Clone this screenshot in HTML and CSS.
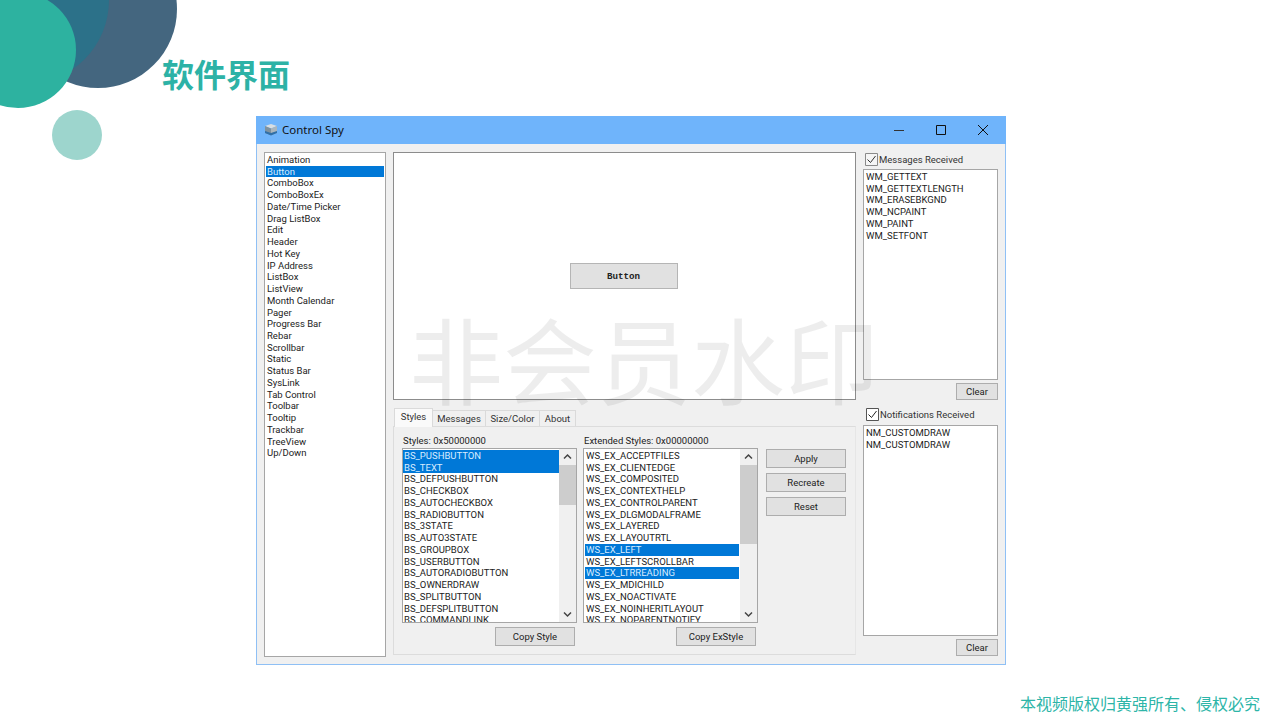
FILE: index.html
```html
<!DOCTYPE html>
<html lang="zh-CN">
<head>
    <meta charset="UTF-8">
    <meta name="viewport" content="width=device-width, initial-scale=1.0">
    <title>软件界面</title>
    <link rel="stylesheet" href="styles.css">
</head>
<body>
    <div class="slide">
        <div class="circle circle-dark"></div>
        <div class="circle circle-mid"></div>
        <div class="circle circle-green"></div>
        <div class="circle circle-small"></div>

        <h1 class="slide-title">软件界面</h1>

        <div class="window">
            <div class="titlebar">
                <svg class="app-icon" width="14" height="13" viewBox="0 0 14 13">
                    <path d="M7 1 L13 3 L7 5.5 L1 3 Z" fill="#d8dee2"/>
                    <path d="M1 3 L7 5.5 V12 L1 10 Z" fill="#7f929f"/>
                    <path d="M13 3 L7 5.5 V12 L13 10 Z" fill="#a9b5bd"/>
                    <path d="M1 8 L7 10 L13 8 V10 L7 12.5 L1 10 Z" fill="#2f6fa8"/>
                </svg>
                <span class="window-name">Control Spy</span>
                <div class="window-controls">
                    <svg width="12" height="12" viewBox="0 0 12 12"><path d="M1 6.5 H11" stroke="#333" fill="none"/></svg>
                    <svg width="12" height="12" viewBox="0 0 12 12"><path d="M1.5 1.5 H10.5 V10.5 H1.5 Z" stroke="#111" fill="none"/></svg>
                    <svg width="12" height="12" viewBox="0 0 12 12"><path d="M1 1 L11 11 M11 1 L1 11" stroke="#111" fill="none"/></svg>
                </div>
            </div>

            <div class="client">
                <div class="listbox control-list">
                    <div class="rows">
                        <div class="row">Animation</div>
                        <div class="row selected">Button</div>
                        <div class="row">ComboBox</div>
                        <div class="row">ComboBoxEx</div>
                        <div class="row">Date/Time Picker</div>
                        <div class="row">Drag ListBox</div>
                        <div class="row">Edit</div>
                        <div class="row">Header</div>
                        <div class="row">Hot Key</div>
                        <div class="row">IP Address</div>
                        <div class="row">ListBox</div>
                        <div class="row">ListView</div>
                        <div class="row">Month Calendar</div>
                        <div class="row">Pager</div>
                        <div class="row">Progress Bar</div>
                        <div class="row">Rebar</div>
                        <div class="row">Scrollbar</div>
                        <div class="row">Static</div>
                        <div class="row">Status Bar</div>
                        <div class="row">SysLink</div>
                        <div class="row">Tab Control</div>
                        <div class="row">Toolbar</div>
                        <div class="row">Tooltip</div>
                        <div class="row">Trackbar</div>
                        <div class="row">TreeView</div>
                        <div class="row">Up/Down</div>
                    </div>
                </div>

                <div class="center">
                    <div class="preview">
                        <button class="preview-button">Button</button>
                    </div>
                    <div class="tabs">
                        <div class="tab active">Styles</div>
                        <div class="tab tab-messages">Messages</div>
                        <div class="tab tab-size">Size/Color</div>
                        <div class="tab tab-about">About</div>
                    </div>
                    <div class="tab-panel">
                        <div class="style-col">
                            <div class="col-label">Styles: 0x50000000</div>
                            <div class="listbox style-list flush">
                                <div class="rows">
                                    <div class="row selected">BS_PUSHBUTTON</div>
                                    <div class="row selected">BS_TEXT</div>
                                    <div class="row">BS_DEFPUSHBUTTON</div>
                                    <div class="row">BS_CHECKBOX</div>
                                    <div class="row">BS_AUTOCHECKBOX</div>
                                    <div class="row">BS_RADIOBUTTON</div>
                                    <div class="row">BS_3STATE</div>
                                    <div class="row">BS_AUTO3STATE</div>
                                    <div class="row">BS_GROUPBOX</div>
                                    <div class="row">BS_USERBUTTON</div>
                                    <div class="row">BS_AUTORADIOBUTTON</div>
                                    <div class="row">BS_OWNERDRAW</div>
                                    <div class="row">BS_SPLITBUTTON</div>
                                    <div class="row">BS_DEFSPLITBUTTON</div>
                                    <div class="row">BS_COMMANDLINK</div>
                                </div>
                                <div class="scrollbar">
                                    <svg class="arrow" width="17" height="16" viewBox="0 0 17 16"><path d="M5 9.5 L8.5 6 L12 9.5" stroke="#444" stroke-width="1.5" fill="none"/></svg>
                                    <div class="track"><div class="thumb thumb-short"></div></div>
                                    <svg class="arrow" width="17" height="16" viewBox="0 0 17 16"><path d="M5 6.5 L8.5 10 L12 6.5" stroke="#444" stroke-width="1.5" fill="none"/></svg>
                                </div>
                            </div>
                            <button class="btn copy-btn">Copy Style</button>
                        </div>

                        <div class="style-col">
                            <div class="col-label">Extended Styles: 0x00000000</div>
                            <div class="listbox style-list">
                                <div class="rows">
                                    <div class="row">WS_EX_ACCEPTFILES</div>
                                    <div class="row">WS_EX_CLIENTEDGE</div>
                                    <div class="row">WS_EX_COMPOSITED</div>
                                    <div class="row">WS_EX_CONTEXTHELP</div>
                                    <div class="row">WS_EX_CONTROLPARENT</div>
                                    <div class="row">WS_EX_DLGMODALFRAME</div>
                                    <div class="row">WS_EX_LAYERED</div>
                                    <div class="row">WS_EX_LAYOUTRTL</div>
                                    <div class="row selected">WS_EX_LEFT</div>
                                    <div class="row">WS_EX_LEFTSCROLLBAR</div>
                                    <div class="row selected">WS_EX_LTRREADING</div>
                                    <div class="row">WS_EX_MDICHILD</div>
                                    <div class="row">WS_EX_NOACTIVATE</div>
                                    <div class="row">WS_EX_NOINHERITLAYOUT</div>
                                    <div class="row">WS_EX_NOPARENTNOTIFY</div>
                                </div>
                                <div class="scrollbar">
                                    <svg class="arrow" width="17" height="16" viewBox="0 0 17 16"><path d="M5 9.5 L8.5 6 L12 9.5" stroke="#444" stroke-width="1.5" fill="none"/></svg>
                                    <div class="track"><div class="thumb thumb-long"></div></div>
                                    <svg class="arrow" width="17" height="16" viewBox="0 0 17 16"><path d="M5 6.5 L8.5 10 L12 6.5" stroke="#444" stroke-width="1.5" fill="none"/></svg>
                                </div>
                            </div>
                            <button class="btn copy-btn">Copy ExStyle</button>
                        </div>

                        <div class="action-col">
                            <button class="btn">Apply</button>
                            <button class="btn">Recreate</button>
                            <button class="btn">Reset</button>
                        </div>
                    </div>
                </div>

                <div class="log-col">
                    <label class="check-label">
                        <svg class="check" width="13" height="13" viewBox="0 0 13 13"><path d="M.5 .5 H12.5 V12.5 H.5 Z" fill="#f5f5f5" stroke="#8a8a8a"/><path d="M2.5 6.5 L5.5 9.5 L10.5 3" stroke="#333" fill="none"/></svg>
                        Messages Received
                    </label>
                    <div class="listbox log-list">
                        <div class="rows">
                            <div class="row">WM_GETTEXT</div>
                            <div class="row">WM_GETTEXTLENGTH</div>
                            <div class="row">WM_ERASEBKGND</div>
                            <div class="row">WM_NCPAINT</div>
                            <div class="row">WM_PAINT</div>
                            <div class="row">WM_SETFONT</div>
                        </div>
                    </div>
                    <button class="btn clear-btn">Clear</button>

                    <label class="check-label check-second">
                        <svg class="check" width="13" height="13" viewBox="0 0 13 13"><path d="M.5 .5 H12.5 V12.5 H.5 Z" fill="#fff" stroke="#555"/><path d="M2.5 6.5 L5.5 9.5 L10.5 3" stroke="#222" fill="none"/></svg>
                        Notifications Received
                    </label>
                    <div class="listbox log-list">
                        <div class="rows">
                            <div class="row">NM_CUSTOMDRAW</div>
                            <div class="row">NM_CUSTOMDRAW</div>
                        </div>
                    </div>
                    <button class="btn clear-btn">Clear</button>
                </div>
            </div>

            <div class="watermark">非会员水印</div>
        </div>

        <div class="copyright">本视频版权归黄强所有、侵权必究</div>
    </div>
</body>
</html>
```

FILE: styles.css
```css
* {
    box-sizing: border-box;
}

body {
    margin: 0;
    background: #fff;
    overflow: hidden;
}

.slide {
    position: relative;
    width: 1280px;
    height: 720px;
    overflow: hidden;
    font-family: "Noto Sans CJK SC", "Noto Sans", sans-serif;
}

.circle {
    position: absolute;
    border-radius: 50%;
}

.circle-dark {
    left: 19px;
    top: -70px;
    width: 158px;
    height: 158px;
    background: #44667f;
}

.circle-mid {
    left: -59px;
    top: -84px;
    width: 168px;
    height: 168px;
    background: #2c7189;
}

.circle-green {
    left: -40px;
    top: -8px;
    width: 116px;
    height: 116px;
    background: #2db2a0;
}

.circle-small {
    left: 52px;
    top: 110px;
    width: 50px;
    height: 50px;
    background: #9dd5cd;
}

.slide-title {
    position: relative;
    margin: 0;
    padding: 50px 0 0 162px;
    height: 116px;
    font-size: 32px;
    line-height: 46px;
    font-weight: 700;
    color: #2db2a6;
}

.window {
    position: relative;
    margin-left: 256px;
    width: 750px;
    height: 549px;
    background: #f0f0f0;
    border: 1px solid #8fc0f5;
    border-top: 0;
    font-family: Roboto, sans-serif;
    font-size: 9.5px;
    color: #222;
}

.titlebar {
    display: flex;
    align-items: center;
    height: 28px;
    margin: 0 -1px;
    padding: 0 0 1px 8px;
    background: #6fb4fb;
}

.app-icon {
    margin-right: 4px;
}

.window-name {
    font-family: "Noto Sans", sans-serif;
    font-size: 11.5px;
    color: #111;
}

.window-controls {
    display: flex;
    gap: 30px;
    margin-left: auto;
    padding-right: 17px;
}

.client {
    display: grid;
    grid-template-columns: 122px 463px 135px;
    column-gap: 7px;
    padding: 8px 7px 0;
}

.listbox {
    display: flex;
    background: #fff;
    border: 1px solid #a6a6a6;
    overflow: hidden;
}

.rows {
    flex: 1;
    min-width: 0;
    padding: 1px 1px 0;
}

.flush .rows {
    padding-left: 0;
    padding-right: 0;
}

.row {
    height: 11.74px;
    line-height: 12px;
    padding-left: 1px;
    white-space: nowrap;
}

.row.selected {
    background: #0078d7;
    color: #d8ecff;
}

.control-list {
    height: 505px;
}

.center {
    display: flex;
    flex-direction: column;
}

.preview {
    display: flex;
    align-items: center;
    justify-content: center;
    height: 248px;
    padding-right: 2px;
    background: #fff;
    border: 1px solid #8c8c8c;
}

.preview-button {
    width: 108px;
    height: 26px;
    padding: 0;
    background: #e1e1e1;
    border: 1px solid #b5b5b5;
    font-family: "Liberation Mono", monospace;
    font-size: 9.2px;
    font-weight: 700;
    color: #222;
}

.tabs {
    display: flex;
    align-items: flex-end;
    height: 19px;
    margin-top: 8px;
    padding-left: 1px;
}

.tab {
    height: 17px;
    line-height: 15px;
    text-align: center;
    border: 1px solid #dadada;
    border-bottom: 0;
    border-left: 0;
    color: #333;
}

.tab.active {
    width: 39px;
    height: 19px;
    line-height: 15px;
    background: #fafafa;
    border-left: 1px solid #dadada;
    position: relative;
    z-index: 1;
}

.tab-messages {
    width: 53px;
}

.tab-size {
    width: 54px;
}

.tab-about {
    width: 36px;
}

.tab-panel {
    display: flex;
    height: 229px;
    margin-top: -1px;
    padding-left: 8px;
    border: 1px solid #dcdcdc;
    border-right-color: #e6e6e6;
}

.style-col {
    display: flex;
    flex-direction: column;
    width: 175px;
    margin-right: 6px;
}

.col-label {
    height: 21px;
    padding: 7px 0 0 1px;
    line-height: 14px;
}

.style-list {
    height: 175px;
}

.scrollbar {
    display: flex;
    flex-direction: column;
    flex: none;
    width: 17px;
    background: #f0f0f0;
}

.arrow {
    flex: none;
}

.track {
    flex: 1;
}

.thumb {
    background: #cdcdcd;
}

.thumb-short {
    height: 40px;
}

.thumb-long {
    height: 79px;
}

.btn {
    width: 80px;
    height: 19px;
    padding: 0;
    background: #e1e1e1;
    border: 1px solid #adadad;
    font-family: inherit;
    font-size: 9.5px;
    color: #222;
}

.copy-btn {
    align-self: flex-end;
    margin: 4px 2px 0 0;
}

.action-col {
    display: flex;
    flex-direction: column;
    gap: 5px;
    padding: 22px 0 0 2px;
}

.log-col {
    display: flex;
    flex-direction: column;
}

.check-label {
    display: flex;
    align-items: center;
    gap: 1px;
    height: 17px;
    padding: 0 0 3px 2px;
    color: #333;
}

.check-second {
    height: 25px;
    padding: 8px 0 4px 3px;
}

.log-list {
    height: 211px;
}

.clear-btn {
    align-self: flex-end;
    width: 42px;
    height: 17px;
    margin-top: 3px;
}

.watermark {
    position: absolute;
    left: 152px;
    top: 181px;
    font-family: "Noto Sans CJK SC", sans-serif;
    font-size: 94px;
    font-weight: 400;
    line-height: 120px;
    white-space: nowrap;
    color: rgba(0, 0, 0, 0.07);
    pointer-events: none;
}

.copyright {
    position: absolute;
    right: 20px;
    top: 691px;
    font-size: 16px;
    line-height: 24px;
    color: #2db5a8;
}
```
